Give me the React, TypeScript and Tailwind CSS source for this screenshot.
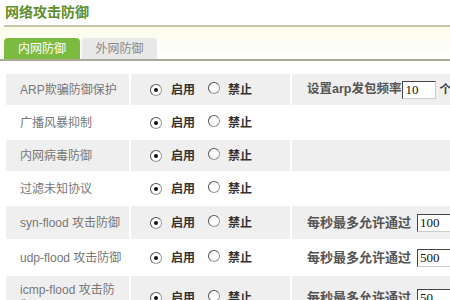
import React from 'react';

const font = { fontFamily: '"Liberation Sans", "Noto Sans CJK SC", sans-serif' };

type Row = {
  label: string[];
  extra?: { text: string; value: string; unit?: string; wide?: boolean };
  h: string;
};

const rows: Row[] = [
  { label: ['ARP欺骗防御保护'], extra: { text: '设置arp发包频率', value: '10', unit: '个' }, h: 'h-[31px]' },
  { label: ['广播风暴抑制'], h: 'h-[31px]' },
  { label: ['内网病毒防御'], h: 'h-[31px]' },
  { label: ['过滤未知协议'], h: 'h-[31px]' },
  { label: ['syn-flood 攻击防御'], extra: { text: '每秒最多允许通过', value: '100', wide: true }, h: 'h-[33px]' },
  { label: ['udp-flood 攻击防御'], extra: { text: '每秒最多允许通过', value: '500', wide: true }, h: 'h-[33px]' },
  { label: ['icmp-flood 攻击防', '御'], extra: { text: '每秒最多允许通过', value: '50', wide: true }, h: 'h-[44px]' },
];

function Radio({ checked }: { checked?: boolean }) {
  return (
    <span className="relative inline-block w-[12px] h-[12px] rounded-full bg-white border border-[#9a9a9a] border-t-[#555] border-l-[#555] shrink-0">
      {checked && (
        <span className="absolute left-[3px] top-[3px] w-[4px] h-[4px] rounded-full bg-[#111]" />
      )}
    </span>
  );
}

export default function App() {
  return (
    <div className="w-[450px] h-[300px] overflow-hidden bg-white relative" style={font}>
      {/* Title */}
      <div className="pl-[5px] pt-[4px] h-[25px] text-[14px] leading-[17px] font-bold text-[#5e8f2c]">
        网络攻击防御
      </div>
      <div className="ml-[4px] h-[2px] bg-[#c4c8a6]" />

      {/* Tabs */}
      <div className="h-[32px] bg-gradient-to-b from-[#fbfbea] to-white flex items-end pl-[4px] gap-[2px]">
        <div className="w-[76px] h-[21px] rounded-t-[4px] bg-[#7cbb3f] text-white text-[12px] flex items-center justify-center">
          内网防御
        </div>
        <div className="w-[75px] h-[21px] rounded-t-[3px] bg-[#e8e8e8] text-[#8a8a8a] text-[12px] flex items-center justify-center">
          外网防御
        </div>
      </div>
      <div className="h-[2px] bg-[#a9ab98]" />

      {/* Table */}
      <table className="mt-[11px] ml-[4px] w-[560px] border-separate border-spacing-[2px] text-[12px]">
        <tbody>
          {rows.map((r, i) => {
            const bg = i % 2 === 0 ? 'bg-[#efefef]' : 'bg-white';
            return (
              <tr key={i} className={r.h}>
                <td className={`${bg} w-[123px] pl-[14px] text-[#777] leading-[16px] align-middle`}>
                  {r.label.map((l, j) => (
                    <div key={j}>{l}</div>
                  ))}
                </td>
                <td className={`${bg} w-[159px] align-middle`}>
                  <div className="flex items-center pl-[19px] text-[#333] font-bold">
                    <Radio checked />
                    <span className="ml-[9px]">启用</span>
                    <span className="ml-[13px]"><Radio /></span>
                    <span className="ml-[8px]">禁止</span>
                  </div>
                </td>
                <td className={`${bg} align-middle`}>
                  {r.extra && (
                    <div className={`flex items-center pl-[15px] text-[#555] font-bold ${r.extra.wide ? 'text-[13px]' : 'text-[12.5px]'}`}>
                      <span>{r.extra.text}</span>
                      <span
                        className={`${r.extra.wide ? 'ml-[6px] w-[60px]' : 'ml-[1px] w-[34px]'} h-[18px] bg-white border border-[#ccc] border-t-[#444] border-l-[#444] text-[#111] font-normal leading-[16px] pl-[2px]`}
                        style={{ fontFamily: '"Liberation Serif", serif', fontSize: '13px' }}
                      >
                        {r.extra.value}
                      </span>
                      {r.extra.unit && <span className="ml-[3px] text-[#444] text-[12px]">{r.extra.unit}</span>}
                    </div>
                  )}
                </td>
              </tr>
            );
          })}
        </tbody>
      </table>
    </div>
  );
}
